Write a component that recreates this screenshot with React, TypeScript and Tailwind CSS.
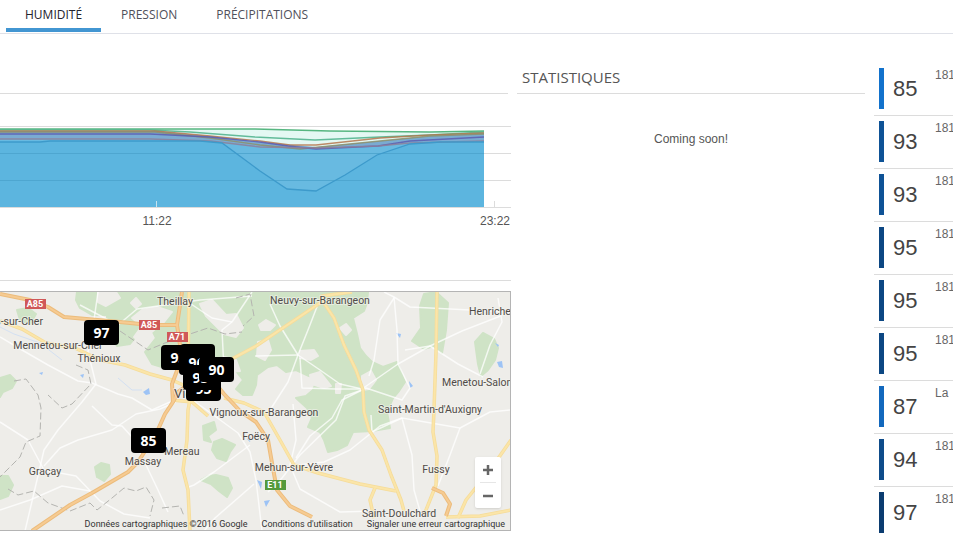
import { useState } from "react";

const tabs = ["HUMIDITÉ", "PRESSION", "PRÉCIPITATIONS"];

const stations = [
    { value: 85, name: "181", color: "bg-[#1272cc]" },
    { value: 93, name: "181", color: "bg-[#0e5296]" },
    { value: 93, name: "181", color: "bg-[#0e5296]" },
    { value: 95, name: "181", color: "bg-[#0c4783]" },
    { value: 95, name: "181", color: "bg-[#0c4783]" },
    { value: 95, name: "181", color: "bg-[#0c4783]" },
    { value: 87, name: "La", color: "bg-[#1268bd]" },
    { value: 94, name: "181", color: "bg-[#0e4c8a]" },
    { value: 97, name: "181", color: "bg-[#0b3c70]" },
];

// later markers are drawn over the earlier ones
const markers = [
    { value: 97, place: "left-[84px] top-[28px]" },
    { value: 93, place: "left-[161px] top-[53px]" },
    { value: 94, place: "left-[180px] top-[52px]" },
    { value: 96, place: "left-[179px] top-[58px]" },
    { value: 95, place: "left-[186px] top-[84px]" },
    { value: 95, place: "left-[183px] top-[73px]" },
    { value: 90, place: "left-[199px] top-[65px]" },
    { value: 85, place: "left-[131px] top-[136px]" },
];

const towns = [
    { name: "Theillay", x: 175, y: 305 },
    { name: "Neuvy-sur-Barangeon", x: 320, y: 304 },
    { name: "Mennetou-sur-Cher", x: 58, y: 349 },
    { name: "Thénioux", x: 99, y: 362 },
    { name: "Vignoux-sur-Barangeon", x: 264, y: 416 },
    { name: "Saint-Martin-d'Auxigny", x: 430, y: 413 },
    { name: "Foëcy", x: 256, y: 440 },
    { name: "Mehun-sur-Yèvre", x: 294, y: 471 },
    { name: "Fussy", x: 436, y: 473 },
    { name: "Saint-Doulchard", x: 399, y: 517 },
    { name: "Mereau", x: 182, y: 455 },
    { name: "Massay", x: 143, y: 465 },
    { name: "Graçay", x: 45, y: 475 },
];

const forests = [
    "M77 292 L256 292 L368 292 L367 303 L364 311 L353 318 L357 334 L360 348 L366 356 L372 362 L383 367 L397 362 L405 382 L399 391 L393 398 L387 412 L390 428 L372 431 L353 432 L347 445 L337 450 L328 452 L324 440 L320 432 L308 427 L312 418 L307 408 L296 398 L306 396 L313 390 L318 378 L309 376 L296 370 L286 372 L277 365 L268 367 L257 375 L256 385 L252 395 L243 395 L236 389 L243 380 L236 371 L224 358 L200 352 L190 360 L176 366 L165 368 L152 364 L145 352 L156 338 L150 326 L138 334 L130 344 L117 346 L107 330 L107 315 L92 315 L80 308 L76 300 Z",
    "M424 294 L436 292 L448 303 L446 330 L442 353 L434 346 L424 349 L412 341 L421 328 L420 306 Z",
    "M475 342 L483 333 L494 339 L498 348 L495 360 L488 370 L481 376 L478 364 Z",
    "M0 378 L10 375 L16 381 L12 388 L3 392 L0 397 Z",
    "M0 476 L8 476 L13 485 L8 496 L0 499 Z",
    "M95 467 L101 463 L109 465 L110 474 L104 481 L97 477 Z",
    "M203 426 L214 422 L216 430 L208 436 L211 442 L204 440 Z",
    "M214 442 L222 439 L235 445 L230 452 L226 461 L217 458 L212 450 Z",
    "M208 476 L216 475 L228 478 L232 488 L227 497 L219 491 L211 484 L201 480 Z",
    "M17 310 L28 308 L36 314 L30 324 L20 320 Z",
];

const clearings = [
    "M98 292 L116 292 L120 298 L106 306 L98 302 Z",
    "M131 303 L136 298 L141 304 L136 308 Z",
    "M157 307 L172 312 L164 322 L154 330 L140 342 L134 337 L142 326 L132 318 L142 310 Z",
    "M200 304 L212 300 L226 315 L236 314 L243 328 L236 337 L224 334 L212 322 L206 316 Z",
    "M259 325 L266 320 L275 325 L270 330 L261 330 Z",
    "M258 342 L268 340 L271 350 L265 360 L257 356 Z",
    "M340 328 L346 324 L351 330 L346 335 Z",
    "M300 351 L314 350 L318 356 L311 360 L300 358 Z",
    "M310 375 L320 372 L331 386 L324 388 L312 384 Z",
    "M362 376 L371 371 L376 380 L369 389 L362 390 Z",
    "M336 384 L341 384 L340 393 L336 393 Z",
    "M224 357 L236 360 L240 371 L228 372 Z",
];

const paths = [
    "M0 337 L22 350 L48 365 L78 381 L92 383 L118 394 L132 398 L152 410 L170 402",
    "M98 292 L94 320 L88 352 L96 384 L82 402 L58 430 L44 450 L37 480 L25 531",
    "M0 422 L28 440 L44 470 L76 476 L100 501 L124 514 L150 518",
    "M44 466 L60 448 L78 440 L112 430 L136 414 L160 409 L176 402",
    "M92 406 L112 425 L122 426 L132 437 L146 465 L158 490 L168 512",
    "M80 305 L118 325 L137 309 L200 300 L252 296",
    "M252 292 L232 322 L222 330 L224 370 L196 386",
    "M232 322 L212 318 L188 302",
    "M320 299 L308 330 L298 355 L288 382 L270 410",
    "M270 304 L280 326 L298 355 L320 370 L340 384 L362 389",
    "M255 356 L298 355",
    "M300 358 L302 388 L336 389 L362 389 L398 364 L430 346 L462 331 L498 317 L511 310",
    "M394 297 L397 330 L398 364 L410 388 L402 400 L366 388 L342 400 L332 418 L310 436 L296 458",
    "M384 292 L394 297 L410 307 L511 312",
    "M394 298 L380 320 L374 360 L369 376",
    "M362 390 L345 396 L336 420 L300 455 L282 478 L268 492",
    "M498 298 L502 322 L490 345 L480 374",
    "M402 418 L380 426 L350 450 L324 462 L298 465",
    "M402 418 L412 455 L414 490 L420 511",
    "M371 415 L372 432 L402 418 L460 428 L490 412 L511 410",
    "M460 428 L450 455 L438 486",
    "M190 398 L212 414 L238 433 L250 452 L256 480 L262 531",
    "M250 445 L214 472 L194 485 L186 488",
    "M254 484 L238 498 L215 518 L204 531",
    "M293 404 L296 440 L290 465 L300 489 L340 512 L375 511",
    "M405 350 L430 346 L458 364 L483 377",
    "M0 510 L30 500 L62 486 L90 491",
];

const yellowRoads = [
    "M0 321 L22 329 L46 343 L75 348 L100 360 L125 365 L150 374 L172 380 L190 388",
    "M189 292 L188 372 L192 390 L188 410 L187 440 L183 470 L188 490 L190 531",
    "M206 372 L228 361 L256 346 L320 303 L322 296 L352 292",
    "M322 300 L334 318 L344 345 L356 370 L363 390 L364 412 L369 430 L382 450 L391 475 L401 500 L404 511",
    "M437 292 L436 352 L434 410 L433 432 L437 456 L436 485 L424 515",
    "M172 400 L192 402 L208 416",
    "M224 398 L244 403 L264 412 L280 440 L294 465 L318 473 L360 484 L396 491",
    "M375 488 L370 500 L374 518",
    "M511 440 L490 470 L466 500 L458 518",
    "M446 517 L480 516 L511 510",
];

const highways = [
    "M0 294 L30 300 L48 307 L64 317 L120 322 L150 325 L177 325",
    "M182 292 L177 325 L180 345 L178 368 L172 384 L173 402 L165 414 L156 434 L138 462 L128 472 L92 493 L70 505 L32 531",
    "M173 402 L178 392 L206 372 L224 394 L240 411 L256 422 L268 440 L272 463 L277 490 L290 506 L312 517",
    "M432 488 L443 493 L450 504 L446 516",
];

const series = [
    { color: "#3ba96b", points: "0,129 255,129 330,131 430,132 484,131" },
    { color: "#4bb08a", points: "0,130 150,130 190,132 255,137 315,140 380,137 430,135 484,132" },
    { color: "#b5764c", points: "0,131 155,131 210,136 260,141 290,145 316,145 380,138 430,135 484,133" },
    { color: "#8d8f6a", points: "0,132 155,132 210,138 260,145 300,149 330,146 380,141 430,136 484,134" },
    { color: "#5c5cb0", points: "0,134 150,134 210,137 260,142 288,146 316,149 378,146 410,141 484,137" },
    { color: "#8d7f9a", points: "0,139 150,139 210,141 260,147 316,148 378,146 410,143 484,141" },
];

const valley = "0,142 40,142 50,141 200,141 222,143 260,171 287,189 316,191 345,175 377,155 410,144 440,142 484,142";

function Tabs() {
    const [active, setActive] = useState(tabs[0]);

    return (
        <nav className="flex h-[34px] gap-px border-b border-[#dfe1e8] pl-1.5">
            {tabs.map((t) => (
                <button
                    key={t}
                    onClick={() => setActive(t)}
                    className={
                        t === active
                            ? "h-8 border-b-4 border-[#4296d2] px-[19px] pt-0.5 text-[12px] leading-6 text-[#23232d]"
                            : "h-8 border-b-4 border-transparent px-[19px] pt-0.5 text-[12px] leading-6 text-[#50505a]"
                    }
                >
                    {t}
                </button>
            ))}
        </nav>
    );
}

function HumidityChart() {
    return (
        <svg viewBox="0 94 511 136" className="block w-full">
            {[126, 153, 180, 207].map((y) => (
                <path key={y} d={`M0 ${y}.5H511`} stroke="#dcdcdc" />
            ))}
            <polygon points="0,129 255,129 330,131 430,132 484,131 484,207 0,207" fill="#e4f8f3" />
            <polygon points="0,131 155,131 210,136 260,142 316,147 378,141 430,136 484,133 484,207 0,207" fill="#7aabd2" />
            <polygon points="0,139 150,139 222,142 260,147 316,149 378,146 410,142 484,141 484,207 0,207" fill="#68bae1" />
            <polygon points={`${valley} 484,207 0,207`} fill="#5cb5df" />
            <path d="M0 153.5H484 M0 180.5H484" stroke="#4ba3cd" opacity="0.8" />
            {series.map((s) => (
                <polyline key={s.color} points={s.points} fill="none" stroke={s.color} strokeWidth="1.3" opacity="0.85" />
            ))}
            <polyline points={valley} fill="none" stroke="#3d9acb" strokeWidth="1.3" />
            <path d="M156.5 201V207" stroke="#c5e3f0" />
            <path d="M494.5 201V207" stroke="#dcdcdc" />
            <g fill="#555" textAnchor="middle" className="font-['Liberation_Sans',sans-serif] text-[12px]">
                <text x="157" y="225">11:22</text>
                <text x="495" y="225">23:22</text>
            </g>
        </svg>
    );
}

function RoadSign(props: { x: number; y: number; name: string; color: string }) {
    return (
        <g>
            <rect x={props.x - 10} y={props.y - 5} width="21" height="10" fill={props.color} />
            <text x={props.x} y={props.y + 3} textAnchor="middle" fill="#fff" className="text-[9px] font-bold">
                {props.name}
            </text>
        </g>
    );
}

function StationMap() {
    return (
        <div className="relative h-[240px] overflow-hidden border-y border-r border-[#b4b4b4] bg-[#eeede9] font-[Roboto,sans-serif]">
            <svg viewBox="0 292 510 238" preserveAspectRatio="xMinYMin slice" className="block h-full w-full" fill="none" strokeLinejoin="round">
                {forests.map((d) => <path key={d} d={d} fill="#cfe3c6" stroke="#cfe3c6" strokeWidth="2" />)}
                {clearings.map((d) => <path key={d} d={d} fill="#eeede9" stroke="#eeede9" strokeWidth="2" />)}
                <path
                    d="M143 392 L149 388 L150 394 L146 395 Z M80 375 L84 374 L83 378 Z M39 373 L43 372 L42 375 Z M396 333 L401 334 L400 338 Z M497 362 L502 361 L503 368 L499 367 Z M495 343 L499 345 L498 347 Z M409 381 L413 386 L410 388 Z M257 480 L262 482 L261 489 Z M264 501 L270 500 L266 507 Z M247 439 L251 437 L250 442 Z"
                    fill="#9dc3f5"
                />
                <path d="M0 327 L14 334 L40 343 L62 360 M118 378 L132 390 L142 390" stroke="#d3e0f2" />
                {paths.map((d) => <path key={d} d={d} stroke="#fff" strokeWidth="1.5" opacity="0.75" />)}
                <path
                    d="M14 381 L26 379 L38 395 L41 408 L40 436 L26 442 L20 457 L0 477 M76 365 L88 370 L91 384 L72 404 L62 408 L48 395 M120 331 L148 350 L165 343 L190 334 L208 328 L225 334 L242 332 M236 298 L250 294 L254 316 L243 326 M8 489 L18 495 L34 491 L48 503 L70 511 L90 503 L97 510 L112 498 L124 488 L136 491 L146 487 L154 500 L150 516 M162 508 L180 506 L184 516"
                    stroke="#b4b4b0"
                    strokeDasharray="7 3"
                />
                {yellowRoads.map((d) => <path key={d} d={d} stroke="#f5dc9a" strokeWidth="3.5" />)}
                {yellowRoads.map((d) => <path key={d} d={d} stroke="#fbe5a8" strokeWidth="2" />)}
                {highways.map((d) => <path key={d} d={d} stroke="#ecbc7c" strokeWidth="4" />)}
                {highways.map((d) => <path key={d} d={d} stroke="#f6cb92" strokeWidth="2" />)}
                <RoadSign x={35} y={304} name="A85" color="#d05858" />
                <RoadSign x={149} y={325} name="A85" color="#d05858" />
                <RoadSign x={177} y={337} name="A71" color="#d05858" />
                <RoadSign x={275} y={485} name="E11" color="#569a3c" />
                <g fill="#4f4b48" stroke="#f4f3ef" strokeWidth="2" strokeOpacity="0.6" paintOrder="stroke" className="text-[10.5px]">
                    {towns.map((t) => (
                        <text key={t.name} x={t.x} y={t.y} textAnchor="middle">{t.name}</text>
                    ))}
                    <text x="43" y="325" textAnchor="end">Selles-sur-Cher</text>
                    <text x="469" y="315">Henrichemont</text>
                    <text x="442" y="386">Menetou-Salon</text>
                    <text x="174" y="398" className="text-[13px]">Vierzon</text>
                </g>
            </svg>
            {markers.map((m, i) => (
                <button
                    key={i}
                    className={`absolute h-[25px] w-[35px] rounded bg-black text-center font-['Open_Sans',sans-serif] text-[14px] leading-[25px] font-bold text-white ${m.place}`}
                >
                    {m.value}
                </button>
            ))}
            <div className="absolute right-[9px] bottom-[22px] flex w-[26px] flex-col items-center rounded-xs bg-white shadow">
                <button aria-label="Zoom avant" className="flex h-[25px] w-full items-center justify-center">
                    <svg width="10" height="10" stroke="#666" strokeWidth="2.5"><path d="M0 5H10M5 0V10" /></svg>
                </button>
                <span className="h-px w-4 bg-[#e6e6e6]"></span>
                <button aria-label="Zoom arrière" className="flex h-[25px] w-full items-center justify-center">
                    <svg width="10" height="10" stroke="#666" strokeWidth="2.5"><path d="M0 5H10" /></svg>
                </button>
            </div>
            <div className="absolute right-[5px] bottom-0 flex gap-3.5 text-[9px] leading-3 whitespace-nowrap text-[#333]">
                <span>Données cartographiques ©2016 Google</span>
                <a href="#conditions">Conditions d'utilisation</a>
                <a href="#signaler">Signaler une erreur cartographique</a>
            </div>
        </div>
    );
}

export default function App() {
    return (
        <div className="min-h-screen overflow-hidden bg-white font-['Open_Sans',sans-serif]">
            <Tabs />
            <main className="flex items-start">
                <section className="min-w-0 flex-1 pr-1.5">
                    <div className="mr-[3px] h-[60px] border-b border-[#dcdcdc]"></div>
                    <HumidityChart />
                    <div className="h-[51px] border-b border-[#dcdcdc]"></div>
                    <div className="pt-2.5">
                        <StationMap />
                    </div>
                </section>
                <section className="mr-2 w-[348px] shrink-0">
                    <h2 className="h-[60px] border-b border-[#dcdcdc] pt-[31px] pl-[5px] text-[15px] leading-6 text-[#555]">STATISTIQUES</h2>
                    <p className="pt-9 text-center font-['Liberation_Sans',sans-serif] text-[12px] leading-[18px] text-[#555]">Coming soon!</p>
                </section>
                <ul className="w-20 shrink-0 pt-[29px] font-['Liberation_Sans',sans-serif] text-[#444]">
                    {stations.map((s, i) => (
                        <li key={i} className="ml-px flex h-[53px] gap-[9px] overflow-hidden border-b border-[#dcdcdc] pt-[5px] pl-[5px] last:border-transparent">
                            <span className={`h-[41px] w-[5px] shrink-0 ${s.color}`}></span>
                            <span className="w-[33px] shrink-0 text-[22px] leading-[41px]">{s.value}</span>
                            <span className="text-[12px] leading-[14px] text-[#666]">{s.name}</span>
                        </li>
                    ))}
                </ul>
            </main>
        </div>
    );
}
